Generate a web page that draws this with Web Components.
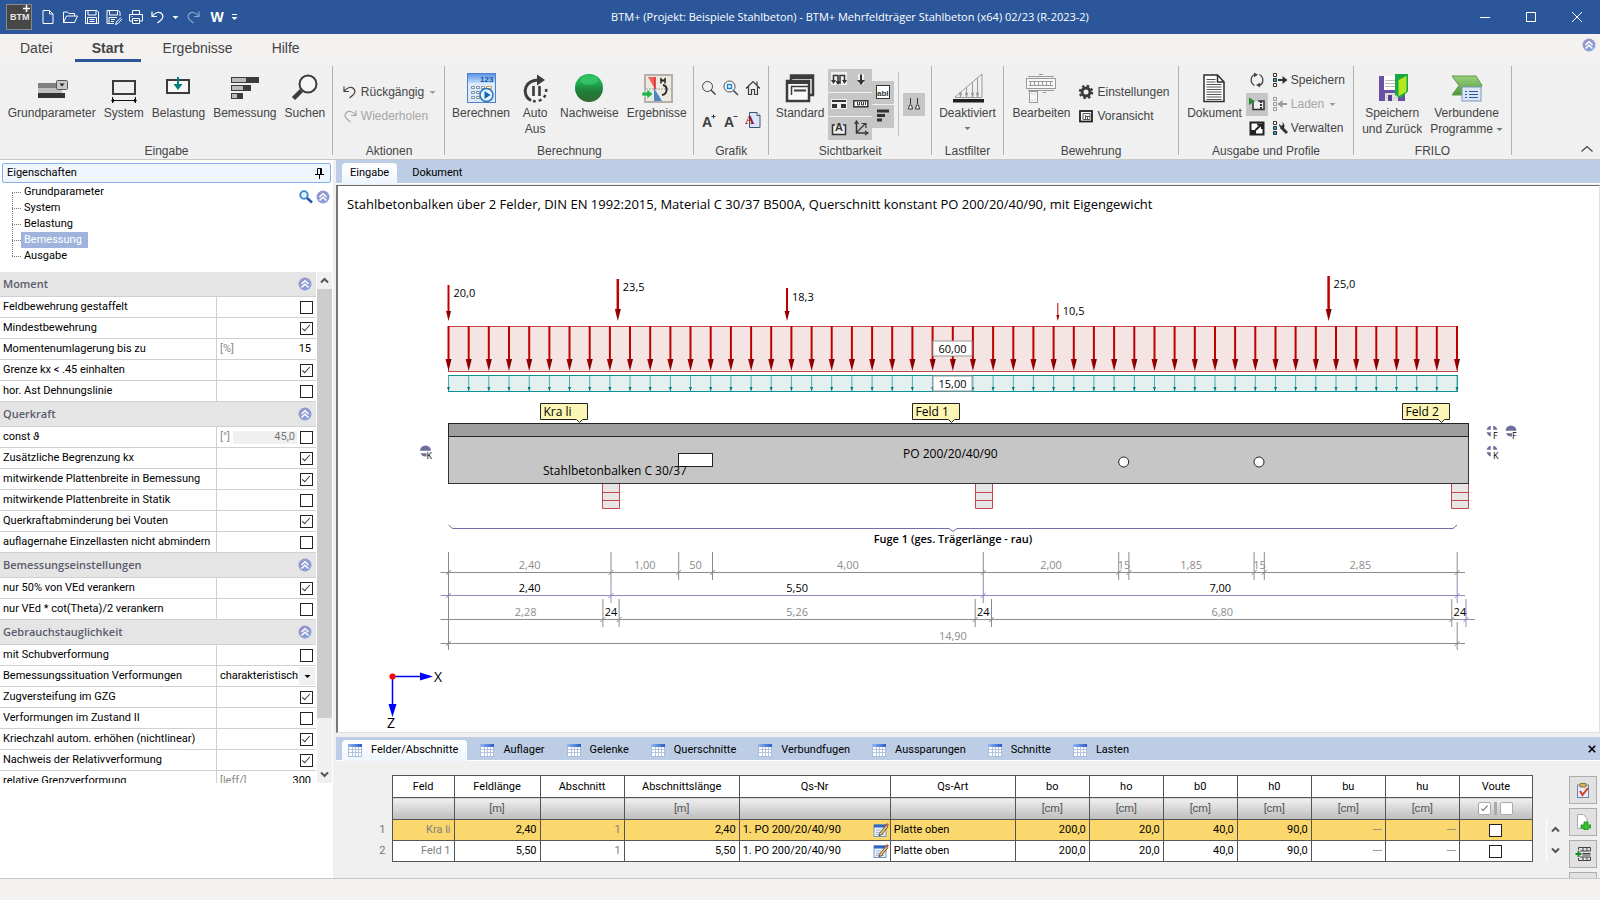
<!DOCTYPE html>
<html lang="de">
<head>
<meta charset="utf-8">
<title>BTM+ Mehrfeldträger Stahlbeton</title>
<style>
  html, body {
    height: 100%;
    margin: 0;
  }

  body {
    font-family: Roboto, "Liberation Sans", sans-serif;
    font-size: 11px;
    line-height: 16px;
    color: #000;
    background: #f0f0f0;
    --ui: "Open Sans", "Noto Sans", sans-serif;
    --ribbon: "Liberation Sans", sans-serif;
    --blue: #2b579a;
    --strip: #bccde5;
    --line: #c8c8c8;
    overflow: hidden;
  }
</style>
</head>
<body>
<btm-app></btm-app>

<script>
/* ---------- icons ---------- */

const loadArrow = (x, y1, y2) => `<path d="M${x} ${y1}V${y2}" stroke-width="1"/><path d="M${x - 1} ${y2 - 4}h2l-1 4z"/>`

const ICONS = {
  logo: [26, 26, '<rect x=".5" y=".5" width="25" height="25" fill="#474747" stroke="#8a8a8a"/><text x="4" y="16" font-family="Liberation Sans" font-size="9" font-weight="bold" fill="#e6e6e6">BTM</text><path d="M20.500 1v7M17 4.500h7" stroke="#fff" stroke-width="1.500"/>'],
  new: [16, 16, '<path d="M3 1.500h6.500l3.500 3.500v9.500H3zM9.500 1.500V5H13" fill="none" stroke="#fff"/>'],
  open: [16, 16, '<path d="M1.500 13.500V3h4l1.500 1.500h5.500V7M1.500 13.500L4.500 7h11l-3 6.500z" fill="none" stroke="#fff"/>'],
  save: [16, 16, '<path d="M1.500 1.500h11.500l1.500 1.500v11.500h-13zM4 1.500v4.500h8v-4.500M3.500 14.500v-6h9v6M5.500 10.500h5M5.500 12.500h5" fill="none" stroke="#fff"/>'],
  saveAs: [16, 16, '<path d="M8 14.500H1v-13h11.500L14 3v4M3.500 1.500v4.500h8v-4.500M3 14.500v-6h8M5 10.500h4M5 12.500h3M15 8.500l-4.500 4.500-1 2.500 2.500-1 4-4.500" fill="none" stroke="#fff"/>'],
  print: [16, 16, '<path d="M4.500 5V1.500h7V5M4 12H1.500V5.500h13V12H12M4.500 9.500h7v5h-7zM6 11.500h4M3.500 7.500h1" fill="none" stroke="#fff"/>'],
  undo: [16, 16, '<path d="M2 2.500v5h5M2.500 7c3-4 7-4.500 9-2.500 2 2 1.500 4.500-.5 6.500L7.500 14" fill="none" stroke="currentColor" stroke-width="1.200"/>'],
  redo: [16, 16, '<path d="M14 2.500v5H9M13.500 7c-3-4-7-4.500-9-2.500-2 2-1.500 4.500.5 6.500L8.500 14" fill="none" stroke="currentColor" stroke-width="1.200"/>'],
  caret: [7, 7, '<path d="M.5 2h6l-3 3z" fill="currentColor"/>'],
  word: [16, 16, '<text x="8" y="13" text-anchor="middle" font-family="Liberation Sans" font-size="14" font-weight="bold" fill="#fff">W</text>'],
  more: [7, 7, '<path d="M1 .5h5" stroke="#fff"/><path d="M.5 3h6l-3 3z" fill="#fff"/>'],
  min: [12, 12, '<path d="M1 6.500h10" stroke="#fff"/>'],
  max: [12, 12, '<rect x="1.500" y="1.500" width="9" height="9" fill="none" stroke="#fff"/>'],
  close: [12, 12, '<path d="M1 1l10 10M11 1L1 11" stroke="#fff"/>'],
  collapse: [14, 14, '<defs><linearGradient id="g" x2="1" y2="1"><stop offset="0" stop-color="#a08fc8"/><stop offset="1" stop-color="#7fa9dc"/></linearGradient></defs><circle cx="7" cy="7" r="6.500" fill="url(#g)"/><path d="M3.500 7L7 3.800 10.500 7M3.500 10.500L7 7.300l3.500 3.200" fill="none" stroke="#fff" stroke-width="1.500"/>'],
  chevronUp: [12, 8, '<path d="M.5 6.500L6 1.500 11.500 6.500" fill="none" stroke="#444" stroke-width="1.200"/>'],
  scrollUp: [9, 9, '<path d="M1 6.500L4.500 3 8 6.500" fill="none" stroke="#555" stroke-width="2"/>'],
  scrollDown: [9, 9, '<path d="M1 2.500L4.500 6 8 2.500" fill="none" stroke="#555" stroke-width="2"/>'],
  pin: [9, 11, '<path d="M2.500 6V.5h4V6M0 6.500h9M4.500 6.500V11M5.500 1v5" fill="none" stroke="#000"/>'],
  find: [14, 14, '<circle cx="5" cy="5" r="3.800" fill="#e4f2ff" stroke="#3f86cf" stroke-width="1.800"/><path d="M8 8l5 4.500" stroke="#2a5aa5" stroke-width="2.600"/>'],

  params: [32, 32, '<rect x="2" y="11" width="24" height="5" fill="#808080"/><rect x="2" y="16" width="24" height="5" fill="#c0c0c0"/><rect x="2" y="21" width="27" height="5" fill="#333"/><rect x="21" y="8.500" width="11" height="9" rx="1" fill="#c8c8c8" stroke="#555" transform="translate(-.5)"/><path d="M23.500 11.500h5L26 14.500z" fill="#222"/>'],
  system: [32, 32, '<rect x="5" y="9" width="22" height="13" fill="none" stroke="#3c3c3c" stroke-width="2"/><path d="M3.500 28.500h25M4.500 25v6M27.500 25v6" stroke="#111" fill="none"/><path d="M3 28.500l3-2v4zM29 28.500l-3-2v4z" fill="#111"/>'],
  load: [32, 32, '<rect x="5" y="8" width="22" height="13" fill="#f8f8f8" stroke="#3c3c3c" stroke-width="2"/><path d="M16 5v8" stroke="#00807c" stroke-width="2"/><path d="M11.500 12h9L16 18z" fill="#00807c"/>'],
  bars: [32, 32, '<rect x="2" y="5" width="28" height="6" fill="#3c3c3c"/><rect x="3" y="6" width="14" height="4" fill="#bbb"/><rect x="2" y="13" width="20" height="6" fill="#3c3c3c"/><rect x="3" y="14" width="11" height="4" fill="#bbb"/><rect x="2" y="21" width="12" height="6" fill="#3c3c3c"/><rect x="3" y="22" width="5" height="4" fill="#bbb"/>'],
  search: [32, 32, '<circle cx="19" cy="12" r="8.500" fill="#f6f6f6" stroke="#3c3c3c" stroke-width="2"/><path d="M12.500 18.500L4.500 26.500" stroke="#3c3c3c" stroke-width="4.500"/>'],
  calc: [32, 32, '<defs><linearGradient id="c" x2="0" y2="1"><stop offset="0" stop-color="#5b95ea"/><stop offset="1" stop-color="#bfdcfb"/></linearGradient></defs><rect x="2.500" y="1.500" width="28" height="29" fill="#dcebfb" stroke="#4f80cc"/><rect x="3" y="2" width="27" height="9" fill="url(#c)"/><text x="15" y="9.500" font-family="Liberation Sans" font-size="8" font-weight="bold" fill="#1d4f9e">123</text><g fill="#fff" stroke="#7f92a8"><path d="M6.500 14.500h3v2h-3zM11.500 14.500h3v2h-3zM16.500 14.500h3v2h-3zM6.500 19.500h3v2h-3zM11.500 19.500h3v2h-3zM6.500 24.500h3v2h-3zM11.500 24.500h3v2h-3z"/><path d="M21.500 14.500h5v2h-5z" stroke="#d99b3c"/></g><circle cx="21.500" cy="23" r="6.500" fill="#e8f4ff" stroke="#2c74b8" stroke-width="1.500"/><path d="M19.500 19v8l6-4z" fill="#1565b5"/>'],
  auto: [32, 32, '<path d="M12 28.500A10.500 10.500 0 0 1 7 15C9 10.500 13 8 20 8" fill="none" stroke="#3c3c3c" stroke-width="3"/><path d="M18 2.500l8 5.500-8 5.500z" fill="#3c3c3c"/><path d="M27 17a10.500 10.500 0 0 1-13 12" fill="none" stroke="#3c3c3c" stroke-width="2.500" stroke-dasharray="3 3"/><path d="M14.500 14v10M20.500 14v10" stroke="#3c3c3c" stroke-width="2.600"/>'],
  ball: [32, 32, '<defs><linearGradient id="b" x2="0" y2="1"><stop offset="0" stop-color="#14b04a"/><stop offset=".25" stop-color="#1eb553"/><stop offset=".6" stop-color="#20803b"/><stop offset="1" stop-color="#2f6a2e"/></linearGradient></defs><circle cx="16" cy="16" r="14" fill="url(#b)"/><ellipse cx="16" cy="8" rx="9" ry="5" fill="#5fe08c" opacity=".35"/>'],
  results: [32, 32, '<rect x="4" y="3" width="27" height="27" fill="#ece9e0" stroke="#b5b0ac" stroke-width="2"/><path d="M5 17h25" stroke="#999" stroke-dasharray="2 1"/><path d="M7 5h7v12z" fill="#f0605f"/><path d="M14 5v12" stroke="#d22" stroke-width="1.500"/><path d="M13 16v13h8z" fill="#4f83c4"/><path d="M20 11.500V7l2 2 2-2v4.500" fill="none" stroke="#222" stroke-width="1.500"/><path d="M22 13c5 1 5 9-1 10" fill="none" stroke="#222" stroke-width="1.800"/><path d="M1 20h5v-3l6 5-6 5v-3H1z" fill="#23b14d" stroke="#fff" stroke-width=".6"/>'],
  zoom: [16, 16, '<circle cx="6.500" cy="6.500" r="5" fill="none" stroke="#444"/><path d="M10 10l4.500 4.500" stroke="#444" stroke-width="1.500"/>'],
  zoomFit: [16, 16, '<circle cx="6.500" cy="6.500" r="5.500" fill="#fff" stroke="#444"/><rect x="4.500" y="4.500" width="4" height="4" fill="#fff" stroke="#1b8ad6" stroke-width="1.500"/><path d="M10.500 10.500L15 15" stroke="#444" stroke-width="1.500"/>'],
  home: [16, 16, '<path d="M1 8.500L8 1.500l7 7M3.500 6.500v8h3v-5h3v5h3v-8M12 1.500V5" fill="none" stroke="#3c3c3c" stroke-width="1.200"/>'],
  fontUp: [16, 16, '<text x="1" y="15" font-family="Liberation Sans" font-size="14" font-weight="bold" fill="#3c3c3c">A</text><path d="M10.500 4.500h4M12.500 2.500v4" stroke="#3c3c3c"/>'],
  fontDown: [16, 16, '<text x="1" y="15" font-family="Liberation Sans" font-size="14" font-weight="bold" fill="#3c3c3c">A</text><path d="M10.500 4.500h4" stroke="#3c3c3c"/>'],
  fontPage: [16, 16, '<path d="M4.500.5H12l3 3v12H4.500z" fill="#d8e6f8" stroke="#44546e"/><path d="M12 .5v3h3" fill="#fff" stroke="#44546e"/><text x="0" y="12" font-family="Liberation Serif" font-size="13" font-weight="bold" fill="#a01018">A</text>'],
  standard: [32, 32, '<path d="M7 9V3.500h22V23h-4" fill="none" stroke="#3c3c3c" stroke-width="2.500"/><path d="M7 5h22" stroke="#3c3c3c" stroke-width="4"/><rect x="3" y="9" width="22" height="20" fill="#fafafa" stroke="#3c3c3c" stroke-width="2.500"/><path d="M3 10h22" stroke="#3c3c3c" stroke-width="4"/><path d="M7.500 23V14.500H25" fill="none" stroke="#3c3c3c" stroke-width="1.500"/><path d="M10 18.500h12" stroke="#3c3c3c" stroke-width="2"/>'],
  visLoads: [16, 16, '<g stroke="#333" stroke-width="1.500" fill="none"><rect x="0" y="0" width="16" height="13" fill="#eee" stroke="none"/><path d="M2.500 10V3.500h4.500V12M9 12V3.500h4.500V10"/></g><path d="M0 8h5l-2.500 4zM4.500 9h5L7 13zM11 8h5l-2.500 4z" fill="#333"/>'],
  visArrow: [16, 16, '<rect x="5" y="2" width="6" height="10" fill="#eee"/><path d="M8 2.500v8" stroke="#333" stroke-width="2"/><path d="M4 8l4 5 4-5z" fill="#333"/>'],
  visSpan: [16, 16, '<rect y="3" width="16" height="10" fill="#eee"/><path d="M1 5h14" stroke="#333" stroke-width="2"/><rect x="1" y="8" width="5" height="4" fill="#333"/><rect x="10" y="8" width="5" height="4" fill="#333"/>'],
  visDims: [16, 16, '<rect x=".8" y="4.800" width="14" height="6" fill="#fff" stroke="#333" stroke-width="1.500"/><path d="M4.500 6v3h2V6M8.500 6v3h2V6M12.500 6v3" stroke="#333" fill="none"/>'],
  visText: [16, 16, '<path d="M4 5H1.500v9.500h13V5H12" fill="#eee" stroke="#333" stroke-width="1.500"/><text x="4" y="11" font-family="Liberation Sans" font-size="11" font-weight="bold" fill="#333">A</text>'],
  visAxes: [16, 16, '<path d="M3.500 2v11H14" fill="none" stroke="#333" stroke-width="1.500"/><path d="M3.500 12.500L12 4M1.500 4l2-3 2 3M12 11l3 2-3 2M8.500 3.500H13V8" fill="none" stroke="#333" stroke-width="1.200"/>'],
  visAbl: [16, 16, '<rect x="1.500" y="1.500" width="13" height="13" fill="#fff" stroke="#333"/><text x="2" y="11.500" font-family="Liberation Sans" font-size="8" font-weight="bold" fill="#333">abl</text>'],
  visBars: [16, 16, '<path d="M2 3h12M2 7.500h8M2 12h5" stroke="#333" stroke-width="3"/>'],
  visPins: [16, 16, '<path d="M4.500 2v6M11.500 2v6" stroke="#333"/><path d="M2.500 13l1-4h2l1 4zM9.500 13l1-4h2l1 4z" fill="#fff" stroke="#333"/>'],
  filter: [32, 32, `<g stroke="#9a9a9a" fill="#9a9a9a"><path d="M3 25L30 2v23" fill="none"/>${loadArrow(8.5, 20, 25)}${loadArrow(14.5, 15, 25)}${loadArrow(20.5, 10, 25)}${loadArrow(25.5, 6, 25)}<path d="M3 25.500h27" stroke-width="1"/></g><rect x="1" y="27" width="31" height="3.500" fill="#1e1e1e"/>`],
  rebar: [32, 32, '<g fill="none" stroke="#999"><path d="M3 4.500h26M14 2.500h4M3 18.500h26M18 20.500h3"/><rect x="1.500" y="6.500" width="29" height="10" fill="#f8f8f8"/><path d="M4 9.500h24M4 13.500h24M5.500 9.500v4M9.500 9.500v4M13.500 9.500v4M17.500 9.500v4M21.500 9.500v4M25.500 9.500v4"/><rect x="4.500" y="19.500" width="8" height="11" fill="#f8f8f8"/><path d="M6.500 22h4M6.500 28h4" stroke-dasharray="1 2"/></g>'],
  gear: [16, 16, '<circle cx="8" cy="8" r="4" fill="none" stroke="#3c3c3c" stroke-width="3"/><circle cx="8" cy="8" r="6" fill="none" stroke="#3c3c3c" stroke-width="2.500" stroke-dasharray="2.360 2.360"/>'],
  preview: [16, 16, '<rect x="2" y="3" width="12" height="10.500" fill="#fff" stroke="#222" stroke-width="1.800"/><path d="M5 5.500h7M5 5.500v6h7v-6M7.500 7v4M7.500 8.500h4.500M9.500 8.500v3" fill="none" stroke="#555"/>'],
  doc: [32, 32, '<path d="M6 3h13.500l6.500 7v19.500H6z" fill="#fff" stroke="#2c2c2c" stroke-width="1.500"/><path d="M19.500 3v7H26" fill="none" stroke="#2c2c2c" stroke-width="1.500"/><path d="M8.500 7.500h9M8.500 10h9M8.500 12.500h15M8.500 15h15M8.500 17.500h15M8.500 20h15M8.500 22.500h15M8.500 25h15M8.500 27.500h15" stroke="#555"/>'],
  refresh: [16, 16, '<path d="M6 2.500C1 4 1 11 5.500 13.500M10 13.500C15 12 15 5 10.500 2.500" fill="none" stroke="#444" stroke-width="1.300"/><path d="M5 .5l4 2.300-4 2.400zM11 10.700L7 13l4 2.400z" fill="#444"/>'],
  playView: [16, 16, '<path d="M4 6v7.500h11V5H9" fill="#eee" stroke="#333" stroke-width="1.500"/><path d="M12 5v8" stroke="#333" stroke-dasharray="2 1" stroke-width="2"/><path d="M0 1.500v7.500l6-3.700z" fill="#2a8a34"/>'],
  expand: [16, 16, '<rect x="1.500" y="2.500" width="13" height="12" fill="#fff" stroke="#222" stroke-width="2"/><path d="M1 10h6v5H1z" fill="#222"/><path d="M6.500 10L12 5M8 4.500h5V9" fill="none" stroke="#222" stroke-width="2"/>'],
  profileSave: [16, 16, '<path d="M1.500 1.500h3v3h-3zM1.500 11.500h3v3h-3z" fill="#fff" stroke="#333"/><path d="M1.500 6.500h3v3h-3z" fill="#2aa7e0" stroke="#333"/><path d="M6 8h6" stroke="#333" stroke-width="2"/><path d="M10.500 4l5 4-5 4z" fill="#333"/>'],
  profileLoad: [16, 16, '<path d="M1.500 1.500h3v3h-3zM1.500 6.500h3v3h-3zM1.500 11.500h3v3h-3z" fill="#eee" stroke="#999"/><path d="M8 8h7" stroke="#999" stroke-width="2"/><path d="M10.500 4l-5 4 5 4z" fill="#999"/>'],
  profileEdit: [16, 16, '<path d="M1.500 1.500h3v3h-3z" fill="#fff" stroke="#333"/><path d="M1.500 6.500h3v3h-3zM1.500 11.500h3v3h-3z" fill="#2aa7e0" stroke="#333"/><path d="M9 7l6 6" stroke="#333" stroke-width="3"/><path d="M7 4l2.500 2L11 4 9.500 2a4 4 0 0 1 2 6.500A4 4 0 0 1 7 4z" fill="#333"/>'],
  saveBack: [32, 32, '<rect x="3" y="4" width="26" height="25" fill="#6a51a3"/><rect x="8" y="4" width="15" height="14" fill="#fff"/><path d="M9 8.500h12M9 11.500h12M9 14.500h12" stroke="#bbb"/><rect x="9" y="21" width="13" height="8" fill="#ddd"/><rect x="12" y="23" width="4" height="6" fill="#5b4290"/><path d="M19 2h13v17l-7 7-6-3z" fill="#19a845"/><path d="M22 8l9-5v17l-9 5z" fill="#b6e61d" stroke="#19a845"/>'],
  linked: [32, 32, '<defs><linearGradient id="l" x2="0" y2="1"><stop offset="0" stop-color="#9bd07a"/><stop offset="1" stop-color="#4d9a3c"/></linearGradient></defs><path d="M1 4h24l6 9.500-6 9.500H1l7-9.500z" fill="url(#l)" stroke="#5d9a4d"/><rect x="11" y="15" width="19" height="14" fill="#dce6f2" stroke="#7a98c0"/><path d="M14 19.500h2M14 22.500h2M14 25.500h2M18 19.500h9M18 22.500h9M18 25.500h9" stroke="#2a5aa5"/>'],

  table: [16, 16, '<defs><linearGradient id="t"><stop offset="0" stop-color="#8fb8f2"/><stop offset="1" stop-color="#2a5ccc"/></linearGradient></defs><rect x="1.500" y="2.500" width="13" height="12" fill="#fff" stroke="#a9bcdc"/><rect x="1" y="2" width="14" height="3" fill="url(#t)"/><path d="M2 7.500h12M2 10.500h12M5.500 5v9M8.500 5v9M11.500 5v9" stroke="#b4c4e0"/>'],
  edit: [16, 16, '<rect x="1" y="3" width="12" height="11.500" fill="#eaf2fd" stroke="#7a93bd"/><rect x="1" y="2.500" width="12" height="3" fill="#2f66c4"/><path d="M3 8h5M3 10.500h4M3 12.500h8" stroke="#9db4d8"/><path d="M6.500 11.500L13 3l2 1.600-6.500 8.200-2.500.9z" fill="#e8c067" stroke="#4b3a20" stroke-width=".8"/><path d="M12.500 3L14 1l2 1.600-1.500 2z" fill="#c85a4a"/>'],
  x: [8, 8, '<path d="M.8.8l6.400 6.400M7.200.8L.8 7.200" stroke="#000" stroke-width="1.600"/>'],
  clipboard: [16, 16, '<rect x="2.500" y="3" width="11" height="12.500" fill="#e4edfa" stroke="#6c82a6"/><path d="M5 1.500h6V5H5z" fill="#d9b45f" stroke="#8f7434"/><path d="M5 9l2.500 4L13 6" fill="none" stroke="#dc3a22" stroke-width="2"/>'],
  addPage: [16, 16, '<path d="M2.500.5h6l3.500 4v10H2.500z" fill="#fff" stroke="#aaa"/><path d="M9 8h4v3h3v3h-3v2H9v-2H6v-3h3z" fill="#35c035" stroke="#178a17" stroke-width=".8"/>'],
  addRow: [16, 16, '<path d="M3.500 4V1.500h12V5H5M3.500 12v2.500h12V11H5M8 1.500V5M12 1.500V5M8 11v3.500M12 11v3.500M7.500 7.500h8M7.500 9h8" fill="none" stroke="#444"/><path d="M.5 8h6M3.500 5v6" stroke="#1b8a2b" stroke-width="2"/>']
}

customElements.define('ui-icon',

  /**
   * Draws one of the icons by its name.
   */
  class extends HTMLElement {
    connectedCallback () {
      const [w, h, body] = ICONS[this.getAttribute('name')]
      this.attachShadow({ mode: 'open' }).innerHTML = `
        <style>
          :host { display: inline-flex; flex: none; }
          svg { display: block; }
        </style>
        <svg width="${w}" height="${h}" viewBox="0 0 ${w} ${h}" aria-hidden="true">${body}</svg>`
    }
  })

/* ---------- title bar ---------- */

customElements.define('title-bar',
  class extends HTMLElement {
    connectedCallback () {
      const tool = (name, label) => `<button title="${label}"><ui-icon name="${name}"></ui-icon></button>`
      this.attachShadow({ mode: 'open' }).innerHTML = `
        <style>
          :host { display: flex; align-items: center; height: 34px; background: var(--blue); color: #fff; font-family: var(--ui); }
          button { background: none; border: 0; padding: 0; color: inherit; display: flex; align-items: center; justify-content: center; }
          .tools { display: flex; gap: 6px; padding-left: 6px; align-items: center; }
          .tools button:first-child { margin-right: 2px; }
          .dim { color: #8aa3cc; display: flex; }
          h1 { flex: 1; margin: 0; font-size: 11px; font-weight: normal; text-align: center; }
          .window { display: flex; align-self: stretch; }
          .window button { width: 46px; }
        </style>
        <div class="tools">
          ${tool('logo', 'BTM+')}${tool('new', 'Neu')}${tool('open', 'Öffnen')}${tool('save', 'Speichern')}
          ${tool('saveAs', 'Speichern unter')}${tool('print', 'Drucken')}${tool('undo', 'Rückgängig')}
          ${tool('caret', 'Liste')}<span class="dim">${tool('redo', 'Wiederholen')}</span>
          ${tool('word', 'Word')}${tool('more', 'Anpassen')}
        </div>
        <h1><slot></slot></h1>
        <div class="window">${tool('min', 'Minimieren')}${tool('max', 'Maximieren')}${tool('close', 'Schließen')}</div>`
    }
  })

/* ---------- ribbon ---------- */

customElements.define('ribbon-tabs',
  class extends HTMLElement {
    connectedCallback () {
      this.attachShadow({ mode: 'open' }).innerHTML = `
        <style>
          :host { display: flex; height: 28px; background: #f3f2f1; font: 14px/24px var(--ribbon); color: #444; padding-right: 4px; align-items: flex-start; }
          nav { display: flex; flex: 1; padding-left: 3px; }
          button { font: inherit; color: inherit; border: 0; background: none; padding: 2px 17px 0; height: 28px; border-bottom: 3px solid transparent; margin-right: 5px; }
          button.on { font-weight: bold; border-color: var(--blue); }
          ui-icon { margin-top: 4px; }
        </style>
        <nav><button>Datei</button><button class="on">Start</button><button>Ergebnisse</button><button>Hilfe</button></nav>
        <ui-icon name="collapse"></ui-icon>`
    }
  })

customElements.define('ribbon-group',

  /**
   * A captioned block of the ribbon, with a rule at its right edge.
   */
  class extends HTMLElement {
    connectedCallback () {
      this.attachShadow({ mode: 'open' }).innerHTML = `
        <style>
          :host { display: flex; flex-direction: column; box-sizing: border-box; position: relative; height: 97px; padding-top: 4px; }
          :host::after { content: ""; position: absolute; right: 0; top: 4px; bottom: 4px; width: 1px; background: #b0b0b0; }
          .body { display: flex; flex: 1; justify-content: center; gap: var(--gap, 8px); padding: 0 7px; }
          .label { text-align: center; line-height: 15px; }
        </style>
        <div class="body"><slot></slot></div>
        <div class="label">${this.getAttribute('label')}</div>`
    }
  })

customElements.define('ribbon-button',

  /**
   * Large ribbon button, icon on top. A "|" in the label breaks the line.
   */
  class extends HTMLElement {
    connectedCallback () {
      const label = this.getAttribute('label').split('|').join('<br>')
      const caret = this.hasAttribute('caret') ? '<ui-icon class="caret" name="caret"></ui-icon>' : ''
      this.attachShadow({ mode: 'open' }).innerHTML = `
        <style>
          :host { display: block; }
          button { font: inherit; line-height: 16px; color: inherit; background: none; border: 0; min-width: 34px; padding: 6px 0 0; display: block; text-align: center; white-space: nowrap; }
          .pic { display: flex; justify-content: center; height: 33px; }
          .caret { color: #777; vertical-align: middle; margin-left: 3px; }
          :host([below]) .caret { display: flex; justify-content: center; margin: 4px 0 0; }
        </style>
        <button><span class="pic"><ui-icon name="${this.getAttribute('icon')}"></ui-icon></span>${label}${caret}</button>`
    }
  })

customElements.define('ribbon-item',
  class extends HTMLElement {
    connectedCallback () {
      const caret = this.hasAttribute('caret') ? '<ui-icon class="caret" name="caret"></ui-icon>' : ''
      this.attachShadow({ mode: 'open' }).innerHTML = `
        <style>
          :host { display: block; }
          :host([dim]) { color: #a6a6a6; }
          button { font: inherit; color: inherit; background: none; border: 0; padding: 0; height: 24px; display: flex; align-items: center; gap: 3px; white-space: nowrap; }
          .caret { color: #999; margin-left: 2px; }
        </style>
        <button><ui-icon name="${this.getAttribute('icon')}"></ui-icon><slot></slot>${caret}</button>`
    }
  })

customElements.define('icon-grid',

  /**
   * Small icon-only buttons in columns; "on" gives them the pressed look.
   */
  class extends HTMLElement {
    connectedCallback () {
      const buttons = this.getAttribute('icons').split(' ').map(name => {
        const [id, on] = name.split(':')
        return `<button class="${on || ''}" title="${id}"><ui-icon name="${id}"></ui-icon></button>`
      }).join('')
      this.attachShadow({ mode: 'open' }).innerHTML = `
        <style>
          :host { display: grid; grid-template-columns: repeat(var(--cols, 1), 22px); grid-auto-rows: 23px; row-gap: var(--row-gap, 1px); align-content: center; padding-bottom: 2px; }
          button { background: none; border: 0; padding: 0; display: flex; align-items: center; justify-content: center; }
          .on { background: #c6c6c6; }
        </style>${buttons}`
    }
  })

customElements.define('app-ribbon',
  class extends HTMLElement {
    connectedCallback () {
      this.attachShadow({ mode: 'open' }).innerHTML = `
        <style>
          :host { display: flex; background: #f0f0f0; border-bottom: 1px solid var(--line); font: 12px/16px var(--ribbon); color: #444; }
          .list { display: flex; flex-direction: column; justify-content: center; padding-bottom: 2px; }
          .flush { display: flex; }
          .rule { width: 1px; background: #c0c0c0; margin: 6px 4px 8px; }
          .fold { margin-left: auto; align-self: flex-end; background: none; border: 0; padding: 0 7px 3px; }
        </style>
        <ribbon-group label="Eingabe" style="min-width: 333px">
          <ribbon-button icon="params" label="Grundparameter"></ribbon-button>
          <ribbon-button icon="system" label="System"></ribbon-button>
          <ribbon-button icon="load" label="Belastung"></ribbon-button>
          <ribbon-button icon="bars" label="Bemessung"></ribbon-button>
          <ribbon-button icon="search" label="Suchen"></ribbon-button>
        </ribbon-group>
        <ribbon-group label="Aktionen" style="min-width: 112px">
          <div class="list">
            <ribbon-item icon="undo" caret>Rückgängig</ribbon-item>
            <ribbon-item icon="redo" dim>Wiederholen</ribbon-item>
          </div>
        </ribbon-group>
        <ribbon-group label="Berechnung" style="min-width: 248px">
          <ribbon-button icon="calc" label="Berechnen"></ribbon-button>
          <ribbon-button icon="auto" label="Auto|Aus"></ribbon-button>
          <ribbon-button icon="ball" label="Nachweise"></ribbon-button>
          <ribbon-button icon="results" label="Ergebnisse"></ribbon-button>
        </ribbon-group>
        <ribbon-group label="Grafik" style="min-width: 75px; --gap: 0">
          <icon-grid style="--cols: 3; --row-gap: 9px; margin: 0 -3px" icons="zoom zoomFit home fontUp fontDown fontPage"></icon-grid>
        </ribbon-group>
        <ribbon-group label="Sichtbarkeit" style="min-width: 162px; --gap: 3px">
          <ribbon-button icon="standard" label="Standard"></ribbon-button>
          <div class="flush">
            <icon-grid style="--cols: 2" icons="visLoads:on visArrow:on visSpan:on visDims:on visText:on visAxes:on"></icon-grid>
            <icon-grid icons="visAbl:on visBars:on"></icon-grid>
            <div class="rule"></div>
            <icon-grid icons="visPins:on"></icon-grid>
          </div>
        </ribbon-group>
        <ribbon-group label="Lastfilter" style="min-width: 72px">
          <ribbon-button icon="filter" label="Deaktiviert" caret below></ribbon-button>
        </ribbon-group>
        <ribbon-group label="Bewehrung" style="min-width: 175px">
          <ribbon-button icon="rebar" label="Bearbeiten"></ribbon-button>
          <div class="list">
            <ribbon-item icon="gear">Einstellungen</ribbon-item>
            <ribbon-item icon="preview">Voransicht</ribbon-item>
          </div>
        </ribbon-group>
        <ribbon-group label="Ausgabe und Profile" style="min-width: 175px; --gap: 4px">
          <ribbon-button icon="doc" label="Dokument"></ribbon-button>
          <icon-grid icons="refresh playView:on expand"></icon-grid>
          <div class="list">
            <ribbon-item icon="profileSave">Speichern</ribbon-item>
            <ribbon-item icon="profileLoad" caret dim>Laden</ribbon-item>
            <ribbon-item icon="profileEdit">Verwalten</ribbon-item>
          </div>
        </ribbon-group>
        <ribbon-group label="FRILO" style="min-width: 158px">
          <ribbon-button icon="saveBack" label="Speichern|und Zurück"></ribbon-button>
          <ribbon-button icon="linked" label="Verbundene|Programme" caret></ribbon-button>
        </ribbon-group>
        <button class="fold" title="Menüband reduzieren"><ui-icon name="chevronUp"></ui-icon></button>`
    }
  })

/* ---------- properties ---------- */

customElements.define('nav-tree',
  class extends HTMLElement {
    connectedCallback () {
      const items = ['Grundparameter', 'System', 'Belastung', 'Bemessung', 'Ausgabe']
      this.attachShadow({ mode: 'open' }).innerHTML = `
        <style>
          :host { display: flex; justify-content: space-between; align-items: flex-start; height: 88px; box-sizing: border-box; background: #fff; }
          ul { list-style: none; margin: 0; padding: 0 0 0 12px; }
          li { height: 16px; display: flex; align-items: center; position: relative; }
          li::before { content: ""; width: 9px; border-top: 1px dotted #777; }
          li + li::after { content: ""; position: absolute; left: 0; top: -8px; height: 16px; border-left: 1px dotted #777; }
          a { color: #000; text-decoration: none; padding: 0 6px 0 3px; }
          a.on { background: #9fb3dc; color: #fff; }
          div { display: flex; gap: 3px; padding: 6px 3px 0 0; align-items: center; }
        </style>
        <ul>${items.map(t => `<li><a href="#${t}"${t === 'Bemessung' ? ' class="on"' : ''}>${t}</a></li>`).join('')}</ul>
        <div><ui-icon name="find"></ui-icon><ui-icon name="collapse"></ui-icon></div>`
    }
  })

customElements.define('property-section',
  class extends HTMLElement {
    connectedCallback () {
      this.attachShadow({ mode: 'open' }).innerHTML = `
        <style>
          :host { display: block; }
          header { display: flex; align-items: center; justify-content: space-between; box-sizing: border-box; height: 25px; padding: 0 4px 0 3px; background: #e5e5e5; border-bottom: 1px solid #d0d0d0; font-family: var(--ui); color: #5b5b6e; }
          h2 { margin: 0; font-size: 11px; font-weight: 600; }
        </style>
        <header><h2>${this.getAttribute('label')}</h2><ui-icon name="collapse"></ui-icon></header>
        <slot></slot>`
    }
  })

customElements.define('property-row',

  /**
   * One line of the property list: label, unit and its input.
   */
  class extends HTMLElement {
    connectedCallback () {
      const unit = this.getAttribute('unit')
      const value = this.getAttribute('value')
      const option = this.getAttribute('option')
      let field = ''
      if (option) field = `<select id="f"><option>${option}</option></select><ui-icon class="drop" name="caret"></ui-icon>`
      else {
        if (value) field = `<input type="text" ${this.hasAttribute('check') ? 'class="off" aria-label="Winkel"' : 'id="f"'} value="${value}">`
        if (!value || this.hasAttribute('check')) field += `<input type="checkbox" id="f"${this.hasAttribute('checked') ? ' checked' : ''}>`
      }
      this.attachShadow({ mode: 'open' }).innerHTML = `
        <style>
          :host { display: flex; height: 20px; border-bottom: 1px solid #d0d0d0; background: #fff; line-height: 20px; }
          label { flex: 1; min-width: 0; padding-left: 3px; white-space: nowrap; }
          .value { flex: none; width: 100px; box-sizing: border-box; border-left: 1px solid #d0d0d0; display: flex; align-items: center; justify-content: flex-end; padding: 0 3px; }
          .unit { color: #888; margin-right: auto; }
          input[type=text] { font: inherit; border: 0; padding: 0 2px 0 0; width: 60px; height: 18px; text-align: right; background: none; box-sizing: border-box; }
          .off { background: #f0f0f0 !important; color: #777; margin-right: 3px; width: 64px !important; height: 13px !important; }
          input[type=checkbox] { appearance: none; width: 13px; height: 13px; margin: 0; border: 1px solid #222; background: #fff; position: relative; }
          input:checked::after { content: ""; position: absolute; left: 3px; top: 0; width: 3px; height: 7px; border: solid #333; border-width: 0 1px 1px 0; transform: rotate(42deg); }
          select { appearance: none; font: inherit; border: 0; background: none; padding: 0; flex: 1; }
          .drop { background: #f0f0f0; width: 16px; height: 18px; align-items: center; justify-content: center; margin-right: -2px; }
        </style>
        <label for="f">${this.getAttribute('label')}</label>
        <div class="value">${unit ? `<span class="unit">${unit}</span>` : ''}${field}</div>`
    }
  })

customElements.define('property-panel',
  class extends HTMLElement {
    connectedCallback () {
      this.attachShadow({ mode: 'open' }).innerHTML = `
        <style>
          :host { display: flex; flex-direction: column; width: 333px; background: #fff; min-height: 0; }
          .head { display: flex; align-items: center; justify-content: space-between; margin: 3px 2px 1px; height: 18px; padding: 0 6px 0 4px; border: 1px solid #86aee6; border-radius: 2px; background: #f0f6fe; }
          .list { flex: 1; min-height: 0; display: flex; }
          .rows { flex: 1; overflow: hidden; }
          .scroll { width: 15px; margin: 0 1px; background: #f0f0f0; display: flex; flex-direction: column; }
          .scroll button { height: 17px; border: 0; padding: 0; background: none; display: flex; align-items: center; justify-content: center; }
          .track { flex: 1; }
          .thumb { height: 90%; background: #cdcdcd; }
          .note { height: 95px; }
        </style>
        <div class="head">Eigenschaften<ui-icon name="pin"></ui-icon></div>
        <nav-tree></nav-tree>
        <div class="list">
          <div class="rows">
            <property-section label="Moment">
              <property-row label="Feldbewehrung gestaffelt"></property-row>
              <property-row label="Mindestbewehrung" checked></property-row>
              <property-row label="Momentenumlagerung bis zu" unit="[%]" value="15"></property-row>
              <property-row label="Grenze kx &amp;lt; .45 einhalten" checked></property-row>
              <property-row label="hor. Ast Dehnungslinie"></property-row>
            </property-section>
            <property-section label="Querkraft">
              <property-row label="const ϑ" unit="[°]" value="45,0" check></property-row>
              <property-row label="Zusätzliche Begrenzung kx" checked></property-row>
              <property-row label="mitwirkende Plattenbreite in Bemessung" checked></property-row>
              <property-row label="mitwirkende Plattenbreite in Statik"></property-row>
              <property-row label="Querkraftabminderung bei Vouten" checked></property-row>
              <property-row label="auflagernahe Einzellasten nicht abmindern"></property-row>
            </property-section>
            <property-section label="Bemessungseinstellungen">
              <property-row label="nur 50% von VEd verankern" checked></property-row>
              <property-row label="nur VEd * cot(Theta)/2 verankern"></property-row>
            </property-section>
            <property-section label="Gebrauchstauglichkeit">
              <property-row label="mit Schubverformung"></property-row>
              <property-row label="Bemessungssituation Verformungen" option="charakteristisch"></property-row>
              <property-row label="Zugversteifung im GZG" checked></property-row>
              <property-row label="Verformungen im Zustand II"></property-row>
              <property-row label="Kriechzahl autom. erhöhen (nichtlinear)" checked></property-row>
              <property-row label="Nachweis der Relativverformung" checked></property-row>
              <property-row label="relative Grenzverformung" unit="[leff/]" value="300"></property-row>
            </property-section>
          </div>
          <div class="scroll">
            <button title="nach oben"><ui-icon name="scrollUp"></ui-icon></button>
            <div class="track"><div class="thumb"></div></div>
            <button title="nach unten"><ui-icon name="scrollDown"></ui-icon></button>
          </div>
        </div>
        <div class="note"></div>`
    }
  })

/* ---------- tabs over the work area ---------- */

customElements.define('tab-strip',
  class extends HTMLElement {
    connectedCallback () {
      const icon = this.hasAttribute('icons') ? '<ui-icon name="table"></ui-icon>' : ''
      const tabs = this.getAttribute('items').split(',')
        .map((t, i) => `<button role="tab"${i ? '' : ' class="on"'}>${icon}${t}</button>`).join('')
      this.attachShadow({ mode: 'open' }).innerHTML = `
        <style>
          :host { display: flex; height: 23px; background: var(--strip); border-bottom: 1px solid #fff; padding-left: 6px; align-items: stretch; }
          button { font: inherit; color: inherit; border: 0; background: none; display: flex; align-items: center; gap: 8px; padding: 2px 8px 0; margin-right: 7px; }
          :host([icons]) button { padding: 2px 9px 0 5px; }
          .on { background: linear-gradient(#fff, #eef5fe); border-radius: 4px 4px 0 0; margin-top: 3px; margin-bottom: -1px; padding-top: 0 !important; padding-bottom: 2px !important; }
          .close { margin: 0 0 0 auto !important; padding: 0 4px !important; }
        </style>${tabs}${icon ? '<button class="close" title="Schließen"><ui-icon name="x"></ui-icon></button>' : ''}`
    }
  })

/* ---------- beam drawing ---------- */

customElements.define('beam-view',

  /**
   * Beam with loads, supports and dimension chains. Lengths are in metres.
   */
  class extends HTMLElement {
    connectedCallback () {
      this.attachShadow({ mode: 'open' }).innerHTML = `
        <style>
          :host { display: block; min-height: 0; background: #fff; border: 1px solid #e0e0e0; border-top-color: #696969; border-left: 2px solid #787878; font-family: var(--ui); }
          svg { display: block; width: 100%; height: 100%; overflow: visible; }
          text { font-size: 11px; fill: #000; }
          .big { font-size: 12px; }
          .title { font-size: 13px; }
          .dim { fill: #8c8c8c; }
          .mid { text-anchor: middle; }
          .bold { font-weight: 600; }
          .axis { font-size: 14px; }
          .tiny { font-size: 9px; }
        </style>
        <svg viewBox="338 186 1261 545" preserveAspectRatio="xMinYMin meet" role="img" aria-label="Träger mit Lasten">
          <defs>
            <linearGradient id="head"><stop offset="0" stop-color="#c00000"/><stop offset="1" stop-color="#600000"/></linearGradient>
          </defs>
          <text class="title" x="347" y="209">Stahlbetonbalken über 2 Felder, DIN EN 1992:2015, Material C 30/37 B500A, Querschnitt konstant PO 200/20/40/90, mit Eigengewicht</text>
          ${this.loads()}${this.beam()}${this.dims()}${this.axes()}
        </svg>`
    }

    x (m) {
      return Math.round((448.5 + m * 67.7) * 10) / 10
    }

    arrow (x, y1, y2, w, head, len) {
      return `<path d="M${x} ${y1}V${y2 - len}" stroke="#c00000" stroke-width="${w}"/>
        <path d="M${x - head} ${y2 - len}h${head * 2}L${x} ${y2}z" fill="url(#head)"/>`
    }

    loads () {
      const points = [[0, 285, 2, 2.5, '20,0', 297], [2.5, 279, 2.5, 3, '23,5', 291], [5, 288, 2, 2.5, '18,3', 301], [9, 303, 1, 1.5, '10,5', 315], [13, 276, 2.5, 3, '25,0', 288]]
      let out = points.map(([m, top, w, head, t, y]) =>
        this.arrow(this.x(m), top, 321, w, head, head * 4) + `<text x="${this.x(m) + 5}" y="${y}">${t}</text>`).join('')

      out += '<rect x="448.5" y="326.5" width="1009" height="45" fill="#f4e4e4" stroke="#c04848" stroke-width="1"/>'
      out += '<rect x="448.5" y="375.5" width="1009" height="16" fill="#e4f0f0" stroke="#109090"/>'
      for (let i = 0; i <= 50; i++) {
        const x = Math.round((448.5 + i * 20.17) * 10) / 10
        out += this.arrow(x, 326, 371, 2, 3, 12)
        out += `<path d="M${x} 376V391" stroke="#48b0b0"/><path d="M${x - 1.5} 387h3l-1.500 4z" fill="#007878"/>`
      }
      for (const [y, t] of [[341, '60,00'], [376, '15,00']]) {
        out += `<rect x="933" y="${y}" width="39" height="15" fill="#fff" stroke="#999"/><text class="mid" x="952.500" y="${y + 12}">${t}</text>`
      }
      return out
    }

    beam () {
      let out = `<rect x="448.500" y="423.500" width="1020" height="60" fill="#c6c6c6" stroke="#333"/>
        <rect x="448.500" y="423.500" width="1020" height="13" fill="#9e9e9e" stroke="#222"/>
        <rect x="678.500" y="453.500" width="34" height="13" fill="#fff" stroke="#222"/>
        <circle cx="1123.700" cy="462" r="5" fill="#fff" stroke="#222"/>
        <circle cx="1259" cy="462" r="5" fill="#fff" stroke="#222"/>
        <text class="big" x="903" y="458">PO 200/20/40/90</text>
        <text class="big" x="543" y="475">Stahlbetonbalken C 30/37</text>`
      for (const [x, t] of [[540.5, 'Kra li'], [912.5, 'Feld 1'], [1402.5, 'Feld 2']]) {
        out += `<path d="M${x} 403.500h47v16h-5l-3 3-3-3h-36z" fill="#fcf6b4" stroke="#222"/><text class="big" x="${x + 3}" y="416">${t}</text>`
      }
      for (const x of [602.5, 975.5, 1451.5]) {
        out += `<path d="M${x} 484v24.500h17V484M${x} 492.500h17M${x} 500.500h17" fill="#e6e6e6" stroke="#c84848"/>`
      }
      // hinge and restraint marks at both ends
      const mark = (x, y, t, cross) => `<circle cx="${x}" cy="${y}" r="5.500" fill="#6d6d9e"/>
        <path d="${cross ? `M${x} ${y - 6}v12M${x - 6} ${y}h12` : `M${x - 6} ${y + 1}h12`}" stroke="#fff" stroke-width="2.500"/>
        <path d="M${x + 1} ${y + 1}h6v6h-6z" fill="#fff"/><text class="tiny" x="${x + 1}" y="${y + 8}">${t}</text>`
      out += mark(425.5, 451, 'K') + mark(1492, 431, 'F', true) + mark(1511, 431, 'F') + mark(1492, 451, 'K', true)
      out += `<path d="M448.500 525l4 3.500H949l4 3 4-3h496l4-3.500" fill="none" stroke="#7070a8"/>
        <text class="mid bold" x="953" y="543">Fuge 1 (ges. Trägerlänge - rau)</text>`
      return out
    }

    dims () {
      const gray = '#8c8c8c'
      const blue = '#8c8cc0'
      const line = (x1, x2, y, c) => `<path d="M${x1} ${y}H${x2}" stroke="${c}"/>`
      const tick = (x, y1, y2, y, c) => `<path d="M${x} ${y1}V${y2}M${x - 2.5} ${y + 2.5}l5-5" stroke="${c}" fill="none"/>`
      const label = (m, y, t, cls = 'dim') => `<text class="mid ${cls}" x="${this.x(m)}" y="${y}">${t}</text>`

      let out = line(440.5, 1465, 572.5, gray) + line(440.5, 1465, 595.5, blue) + line(440.5, 1460, 619.5, gray) + line(1460, 1475, 619.5, blue) + line(440.5, 1465, 643.5, gray)
      for (const m of [0, 2.4, 3.4, 3.9, 7.9, 9.9, 10.05, 11.9, 12.05, 14.9]) out += tick(this.x(m), 552, 580, 572.5, gray)
      for (const m of [0, 2.4, 7.9, 14.9]) out += tick(this.x(m), 580, 603, 595.5, blue)
      for (const m of [2.28, 2.52, 7.78, 8.02, 14.82]) out += tick(this.x(m), 599, 627, 619.5, gray)
      out += tick(1466, 599, 627, 619.5, blue)
      out += tick(448.5, 580, 650, 643.5, gray) + tick(this.x(14.9), 622, 650, 643.5, gray)

      for (const [m, t] of [[1.2, '2,40'], [2.9, '1,00'], [3.65, '50'], [5.9, '4,00'], [8.9, '2,00'], [9.98, '15'], [10.97, '1,85'], [11.98, '15'], [13.47, '2,85']]) out += label(m, 569, t)
      for (const [m, t] of [[1.2, '2,40'], [5.15, '5,50'], [11.4, '7,00']]) out += label(m, 592, t, 'ink')
      for (const [m, t] of [[1.14, '2,28'], [5.15, '5,26'], [11.43, '6,80']]) out += label(m, 616, t)
      for (const m of [2.4, 7.9, 14.94]) out += label(m, 616, '24', 'ink')
      return out + label(7.45, 640, '14,90')
    }

    axes () {
      return `<path d="M392.500 676.500H423M392.500 676.500V707" stroke="#00f" stroke-width="1.500"/>
        <path d="M420 672.500l13 4-13 4zM388.500 704h8l-4 13z" fill="#00f"/>
        <circle cx="392.500" cy="676.500" r="3" fill="#f00"/>
        <text class="axis" x="434" y="682">X</text><text class="axis" x="387" y="728">Z</text>`
    }
  })

/* ---------- section table ---------- */

customElements.define('section-table',
  class extends HTMLElement {
    connectedCallback () {
      const cols = [['Feld', '', 62], ['Feldlänge', '[m]', 86], ['Abschnitt', '', 84], ['Abschnittslänge', '[m]', 115], ['Qs-Nr', '', 151], ['Qs-Art', '', 125],
        ['bo', '[cm]', 74], ['ho', '[cm]', 74], ['b0', '[cm]', 74], ['h0', '[cm]', 74], ['bu', '[cm]', 74], ['hu', '[cm]', 74], ['Voute', 'check', 73]]
      const rows = [['Kra li', '2,40', '1', '2,40'], ['Feld 1', '5,50', '1', '5,50']]
      const toggles = '<span class="pair"><input type="checkbox" checked aria-label="alle an"><i></i><input type="checkbox" aria-label="alle aus"></span>'
      const row = (r, i) => `<tr class="${i ? '' : 'on'}"><th scope="row">${i + 1}</th>
        <td class="g">${r[0]}</td><td>${r[1]}</td><td class="g">${r[2]}</td><td>${r[3]}</td>
        <td class="l"><span class="qs">1. PO 200/20/40/90<ui-icon name="edit"></ui-icon></span></td><td class="l">Platte oben</td>
        <td>200,0</td><td>20,0</td><td>40,0</td><td>90,0</td><td class="g">---</td><td class="g">---</td>
        <td class="c"><input type="checkbox" aria-label="Voute ${i + 1}"></td></tr>`

      this.attachShadow({ mode: 'open' }).innerHTML = `
        <style>
          :host { display: flex; height: 117px; overflow: hidden; }
          table { flex: 1; table-layout: fixed; border-collapse: collapse; height: max-content; margin-top: 14px; }
          td, thead th { border: 1px solid #555; padding: 0 3px; text-align: right; background: #fff; font-weight: normal; white-space: nowrap; }
          thead th { text-align: center; height: 21px; }
          thead .unit th { background: linear-gradient(#f0f0f0, #bdbdbd); color: #555; }
          td { height: 20px; }
          .on td { background: #fad86e; }
          thead th:first-child, th[scope=row] { border: 0; background: none !important; font-weight: normal; color: #777; text-align: right; padding: 0 6px; }
          .g, .on .g { color: #808080; }
          .l { text-align: left; }
          .c { text-align: center; }
          .qs { display: flex; justify-content: space-between; align-items: center; margin-right: -2px; }
          input { appearance: none; display: inline-block; width: 13px; height: 13px; margin: 0; border: 1px solid #222; background: #fff; position: relative; vertical-align: middle; }
          .pair { display: inline-flex; gap: 3px; vertical-align: middle; }
          .pair input { border-color: #aaa; border-radius: 2px; }
          .pair i { width: 3px; background: #aaa; }
          input:checked::after { content: ""; position: absolute; left: 4px; top: 1px; width: 2px; height: 6px; border: solid #666; border-width: 0 1px 1px 0; transform: rotate(42deg); }
          .move { width: 17px; margin: 58px 5px 17px 13px; display: flex; flex-direction: column; justify-content: space-around; border-left: 1px solid #fff; }
          .move button { border: 0; background: none; padding: 0; height: 20px; }
          .side { display: flex; flex-direction: column; gap: 4px; padding: 15px 3px 0 0; }
          .side button { flex: none; width: 28px; height: 28px; padding: 0; border: 1px solid #adadad; background: #e1e1e1; display: flex; align-items: center; justify-content: center; }
        </style>
        <table>
          <colgroup><col style="width: 56px">${cols.map(c => `<col style="width: ${c[2]}px">`).join('')}</colgroup>
          <thead>
            <tr><th></th>${cols.map(c => `<th scope="col">${c[0]}</th>`).join('')}</tr>
            <tr class="unit"><th></th>${cols.map(c => `<th>${c[1] === 'check' ? toggles : c[1]}</th>`).join('')}</tr>
          </thead>
          <tbody>${rows.map(row).join('')}</tbody>
        </table>
        <div class="move">
          <button title="nach oben"><ui-icon name="scrollUp"></ui-icon></button>
          <button title="nach unten"><ui-icon name="scrollDown"></ui-icon></button>
        </div>
        <div class="side">
          <button title="Prüfen"><ui-icon name="clipboard"></ui-icon></button>
          <button title="Neu"><ui-icon name="addPage"></ui-icon></button>
          <button title="Zeile einfügen"><ui-icon name="addRow"></ui-icon></button>
          <button title="Weitere"></button>
        </div>`
    }
  })

/* ---------- window ---------- */

customElements.define('btm-app',
  class extends HTMLElement {
    connectedCallback () {
      this.attachShadow({ mode: 'open' }).innerHTML = `
        <style>
          :host { display: flex; flex-direction: column; height: 100vh; }
          main { flex: 1; min-height: 0; display: flex; gap: 3px; }
          .work { flex: 1; min-width: 0; display: flex; flex-direction: column; }
          beam-view { flex: 1; margin: 1px 0 4px; }
          footer { height: 21px; background: #f3f2f1; border-top: 1px solid var(--line); }
        </style>
        <title-bar>BTM+ (Projekt: Beispiele Stahlbeton) - BTM+ Mehrfeldträger Stahlbeton (x64) 02/23 (R-2023-2)</title-bar>
        <ribbon-tabs></ribbon-tabs>
        <app-ribbon></app-ribbon>
        <main>
          <property-panel></property-panel>
          <div class="work">
            <tab-strip items="Eingabe,Dokument"></tab-strip>
            <beam-view></beam-view>
            <tab-strip icons items="Felder/Abschnitte,Auflager,Gelenke,Querschnitte,Verbundfugen,Aussparungen,Schnitte,Lasten"></tab-strip>
            <section-table></section-table>
          </div>
        </main>
        <footer></footer>`
    }
  })
</script>
</body>
</html>
